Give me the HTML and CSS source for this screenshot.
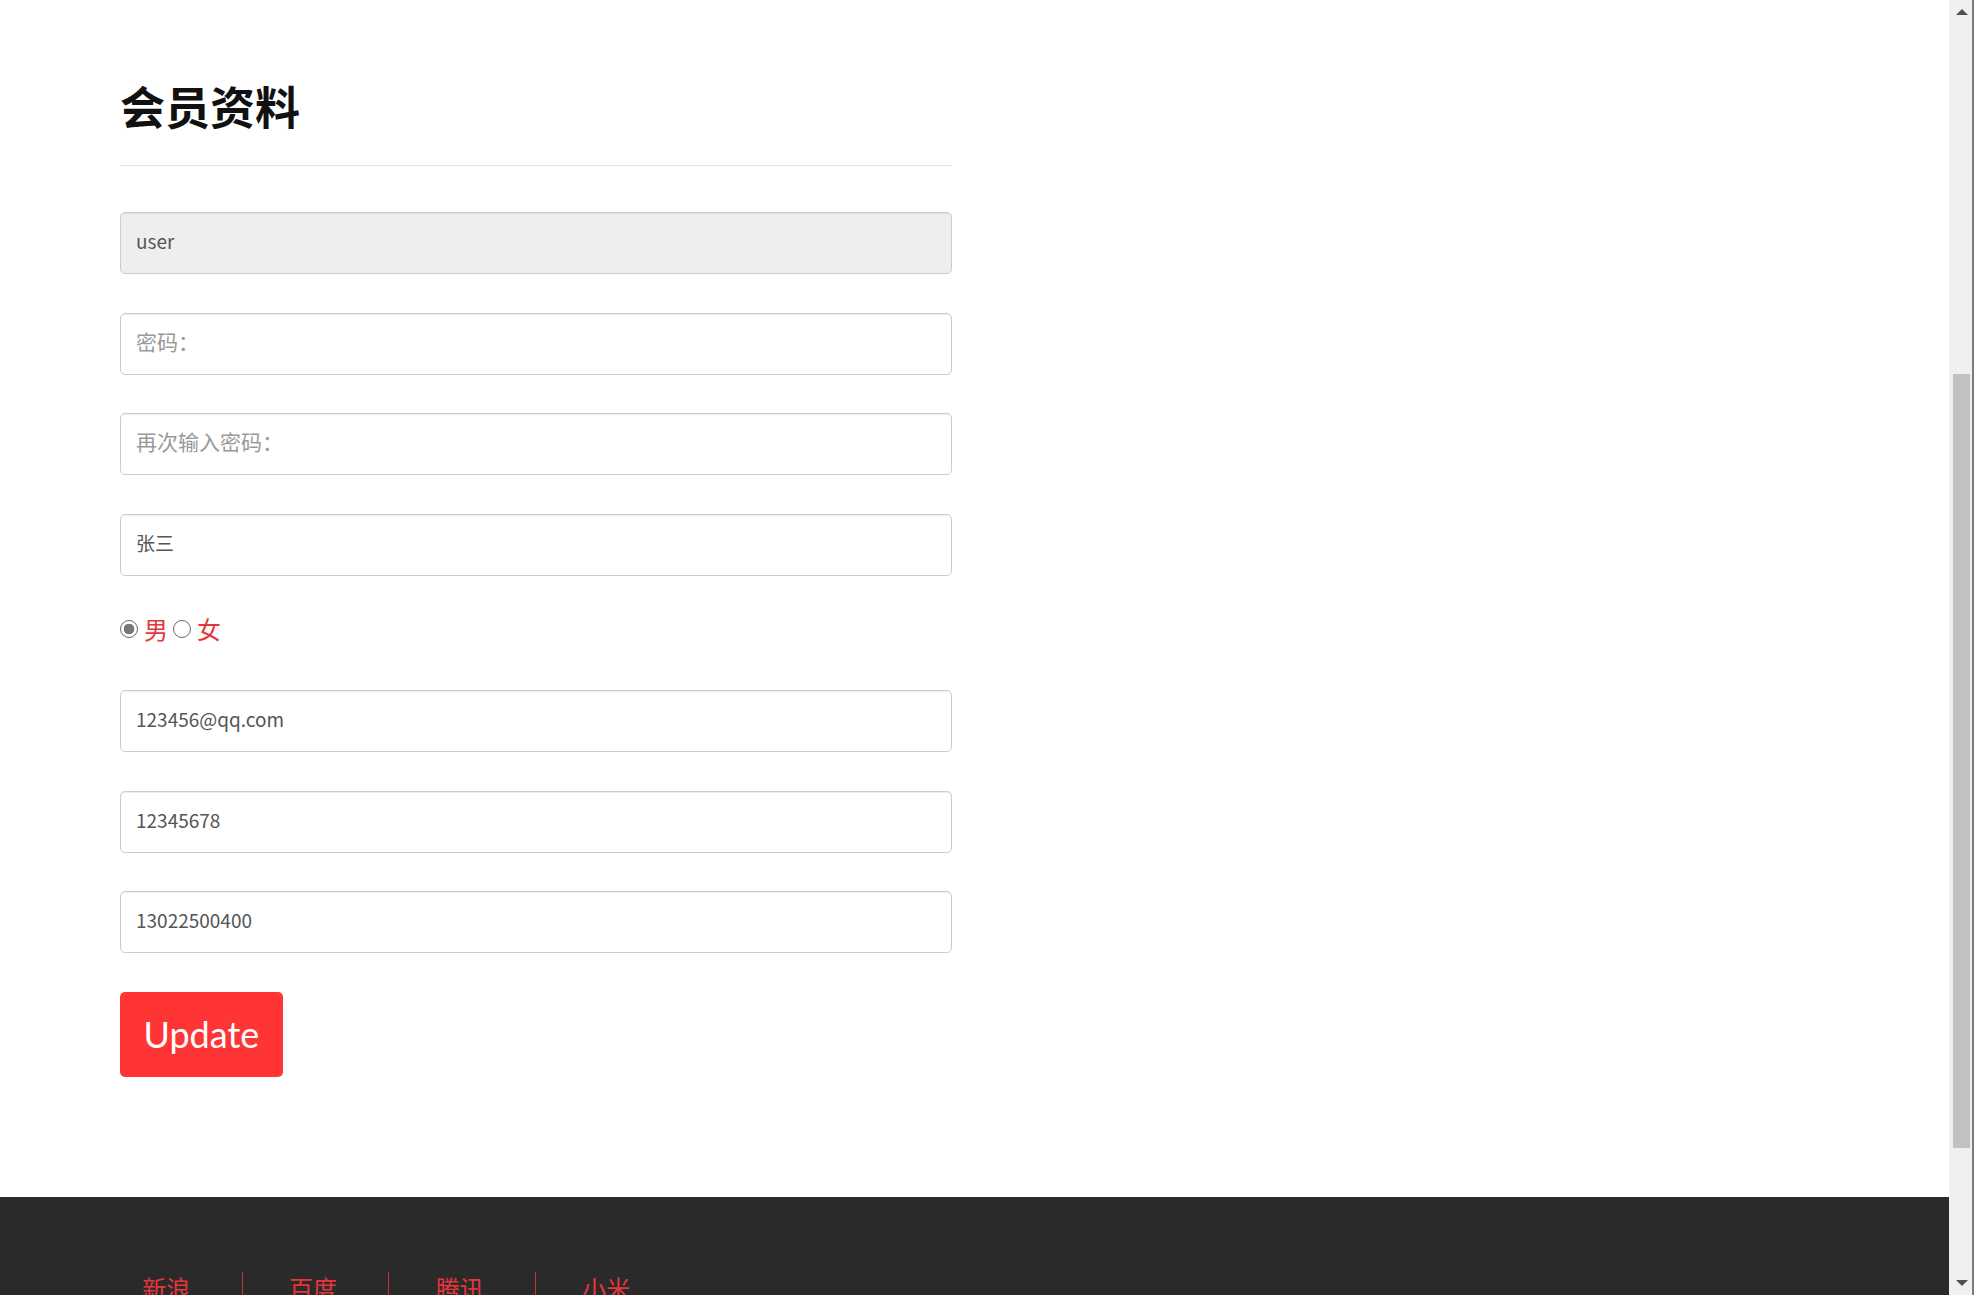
FILE: index.html
```html
<!DOCTYPE html>
<html lang="zh-CN">
<head>
  <meta charset="UTF-8" />
  <meta name="viewport" content="width=device-width, initial-scale=1.0" />
  <title>会员资料</title>
  <link rel="stylesheet" href="styles.css">
</head>
<body>
  <div class="window">
    <div class="page">
      <main class="profile">
        <div class="page-header">
          <h1>会员资料</h1>
        </div>

        <form class="profile-form" onsubmit="return false">
          <input class="field" type="text" value="user" disabled />
          <input class="field" type="password" placeholder="密码：" />
          <input class="field" type="password" placeholder="再次输入密码：" />
          <input class="field" type="text" value="张三" />

          <div class="gender">
            <label class="gender-option"><input type="radio" name="sex" checked /><span>男</span></label>
            <label class="gender-option"><input type="radio" name="sex" /><span>女</span></label>
          </div>

          <input class="field" type="email" value="123456@qq.com" />
          <input class="field" type="text" value="12345678" />
          <input class="field" type="text" value="13022500400" />

          <button class="btn-update" type="submit">Update</button>
        </form>
      </main>

      <footer class="site-footer">
        <ul class="footer-links">
          <li><a href="#">新浪</a></li>
          <li><a href="#">百度</a></li>
          <li><a href="#">腾讯</a></li>
          <li><a href="#">小米</a></li>
        </ul>
      </footer>
    </div>

    <!-- page is shown scrolled down, so the scrollbar is drawn by hand -->
    <div class="scrollbar" aria-hidden="true">
      <div class="scroll-arrow up"></div>
      <div class="scroll-track">
        <div class="scroll-thumb"></div>
      </div>
      <div class="scroll-arrow down"></div>
    </div>
  </div>
</body>
</html>
```

FILE: styles.css
```css
* { box-sizing: border-box; margin: 0; padding: 0; }
html, body { height: 100%; }
body {
  font-family: 'Lato', 'Noto Sans CJK SC', sans-serif;
  font-size: 17.5px;
  color: #555;
  background: #fff;
  overflow: hidden;
}
a { text-decoration: none; color: inherit; }

.window {
  display: flex;
  height: 100vh;
  overflow: hidden;
}
.page {
  flex: 1;
  display: flex;
  flex-direction: column;
  overflow: hidden;
}

/* main form */
.profile {
  padding: 81px 0 120.5px 120px;
}
.page-header {
  width: 832px;
  padding-bottom: 34px;
  border-bottom: 1px solid #e3e3e3;
}
.page-header h1 {
  font-family: 'Noto Sans CJK SC', sans-serif;
  font-size: 45px;
  font-weight: 700;
  line-height: 50px;
  color: #111;
}

.profile-form {
  display: flex;
  flex-direction: column;
  align-items: flex-start;
  width: 832px;
  margin-top: 46px;
}
.field {
  display: block;
  width: 100%;
  height: 62px;
  margin-bottom: 38.5px;
  padding: 0 15px 5px;
  font-family: 'Noto Sans CJK SC', sans-serif;
  font-size: 19px;
  color: #555;
  background: #fff;
  border: 1px solid #ccc;
  border-radius: 5px;
  box-shadow: inset 0 1px 1px rgba(0, 0, 0, 0.075);
  outline: none;
}
.field::placeholder {
  color: #999;
  font-size: 21px;
}
.field:disabled {
  background: #eee;
  color: #555;
  -webkit-text-fill-color: #555;
}

.gender {
  display: flex;
  align-items: center;
  height: 30px;
  margin-bottom: 46px;
}
.gender-option {
  display: flex;
  align-items: center;
  color: #e8353b;
  font-family: 'Noto Sans CJK SC', sans-serif;
  font-size: 24px;
  line-height: 30px;
  margin-right: 5px;
}
.gender-option input {
  -webkit-appearance: none;
  appearance: none;
  width: 18px;
  height: 18px;
  margin-right: 6px;
  border: 1.5px solid #6b6b6b;
  border-radius: 50%;
  background: #fff;
}
.gender-option input:checked {
  background: radial-gradient(circle, #777 0 5px, #fff 5.6px);
}

.btn-update {
  height: 85px;
  padding: 0 23.5px;
  font-family: 'Lato', sans-serif;
  font-size: 36px;
  color: #fff;
  background: #ff3434;
  border: none;
  border-radius: 5px;
  cursor: pointer;
}

/* footer */
.site-footer {
  flex: 1;
  background: #2a2a2a;
  padding: 75px 0 0 96px;
}
.footer-links {
  list-style: none;
  display: flex;
}
.footer-links li {
  padding: 0 51.4px 0 46.3px;
  border-right: 1px solid #c8323a;
  font-family: 'Noto Sans CJK SC', sans-serif;
  font-size: 24px;
  line-height: 32px;
  height: 60px;
}
.footer-links li:last-child { border-right: none; }
.footer-links a { color: #e8353b; }

/* hand drawn scrollbar */
.scrollbar {
  width: 25px;
  display: flex;
  flex-direction: column;
  background: #f0f0f0;
  border-right: 2px solid #7a7a80;
  padding: 0 2px 0 4px;
}
.scroll-arrow {
  height: 24px;
  display: flex;
  align-items: center;
  justify-content: center;
}
.scroll-arrow::before {
  content: '';
  border-left: 6px solid transparent;
  border-right: 6px solid transparent;
}
.scroll-arrow.up::before { border-bottom: 6px solid #505050; }
.scroll-arrow.down::before { border-top: 6px solid #505050; }
.scroll-track {
  flex: 1;
  padding-top: 350px;
  padding-bottom: 123px;
  display: flex;
}
.scroll-thumb {
  flex: 1;
  background: #c1c1c1;
}
```
